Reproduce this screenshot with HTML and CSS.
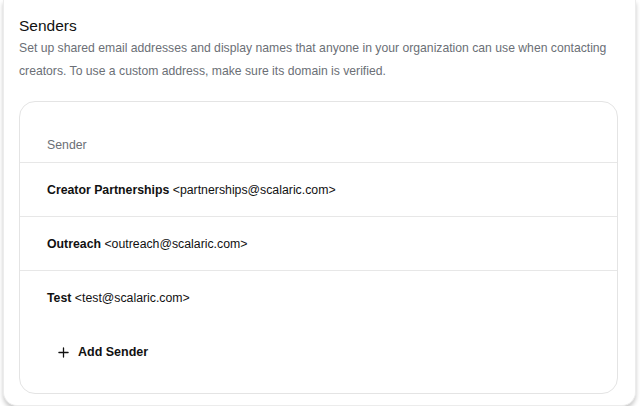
FILE: index.html
```html
<!DOCTYPE html>
<html lang="en">
<head>
  <meta charset="UTF-8" />
  <meta name="viewport" content="width=device-width, initial-scale=1.0"/>
  <title>Senders</title>
  <link rel="stylesheet" href="styles.css">
</head>
<body>
  <div class="settings-card">
    <!-- Section heading -->
    <h2 class="section-title">Senders</h2>
    <p class="section-desc">
      Set up shared email addresses and display names that anyone in your organization can use when contacting
      creators. To use a custom address, make sure its domain is verified.
    </p>

    <!-- Sender list -->
    <div class="sender-table">
      <div class="table-head">Sender</div>
      <div class="sender-row"><b>Creator Partnerships</b> &lt;partnerships@scalaric.com&gt;</div>
      <div class="sender-row"><b>Outreach</b> &lt;outreach@scalaric.com&gt;</div>
      <div class="sender-row last"><b>Test</b> &lt;test@scalaric.com&gt;</div>

      <button class="add-btn">
        <svg width="11" height="11" viewBox="0 0 12 12" aria-hidden="true">
          <path d="M6 1v10M1 6h10" stroke="#111" stroke-width="1.4" stroke-linecap="round"/>
        </svg>
        Add Sender
      </button>
    </div>
  </div>
</body>
</html>
```

FILE: styles.css
```css
/* ==========================
   PAGE & CARD
=========================== */
body {
  font-family: 'Liberation Sans', Arial, sans-serif;
  margin: 0;
  padding: 0 3px;
  background-color: #fff;
  color: #111;
}

.settings-card {
  background: #fff;
  border: 1px solid #ececec;
  border-top: none;
  border-radius: 0 0 14px 14px;
  box-shadow: 0 3px 4px rgba(0, 0, 0, 0.22);
  padding: 16px 17px 10px 15px;
  height: 379px;
  margin-right: 1px;
}

/* ==========================
   HEADER
=========================== */
.section-title {
  font-size: 15.5px;
  font-weight: 400;
  margin: 0 0 1px;
  line-height: 20px;
}

.section-desc {
  font-size: 12.2px;
  color: #6b6f76;
  line-height: 23px;
  margin: 0 0 18px;
}

/* ==========================
   SENDER TABLE
=========================== */
.sender-table {
  border: 1px solid #e4e4e4;
  border-radius: 16px;
  height: 293px;
  box-sizing: border-box;
}

.table-head {
  font-size: 12.3px;
  color: #6b6f76;
  padding: 35px 27px 9px;
  line-height: 16px;
  border-bottom: 1px solid #e7e7e7;
}

.sender-row {
  font-size: 12.3px;
  height: 53px;
  display: flex;
  align-items: center;
  padding: 0 27px;
  border-bottom: 1px solid #e7e7e7;
  white-space: pre;
}

.sender-row.last {
  border-bottom: none;
}

.add-btn {
  background: none;
  border: none;
  font-family: inherit;
  font-size: 12.5px;
  font-weight: 700;
  color: #111;
  display: flex;
  align-items: center;
  gap: 9px;
  margin: 21px 0 0 38px;
  padding: 0;
  cursor: pointer;
}
```
